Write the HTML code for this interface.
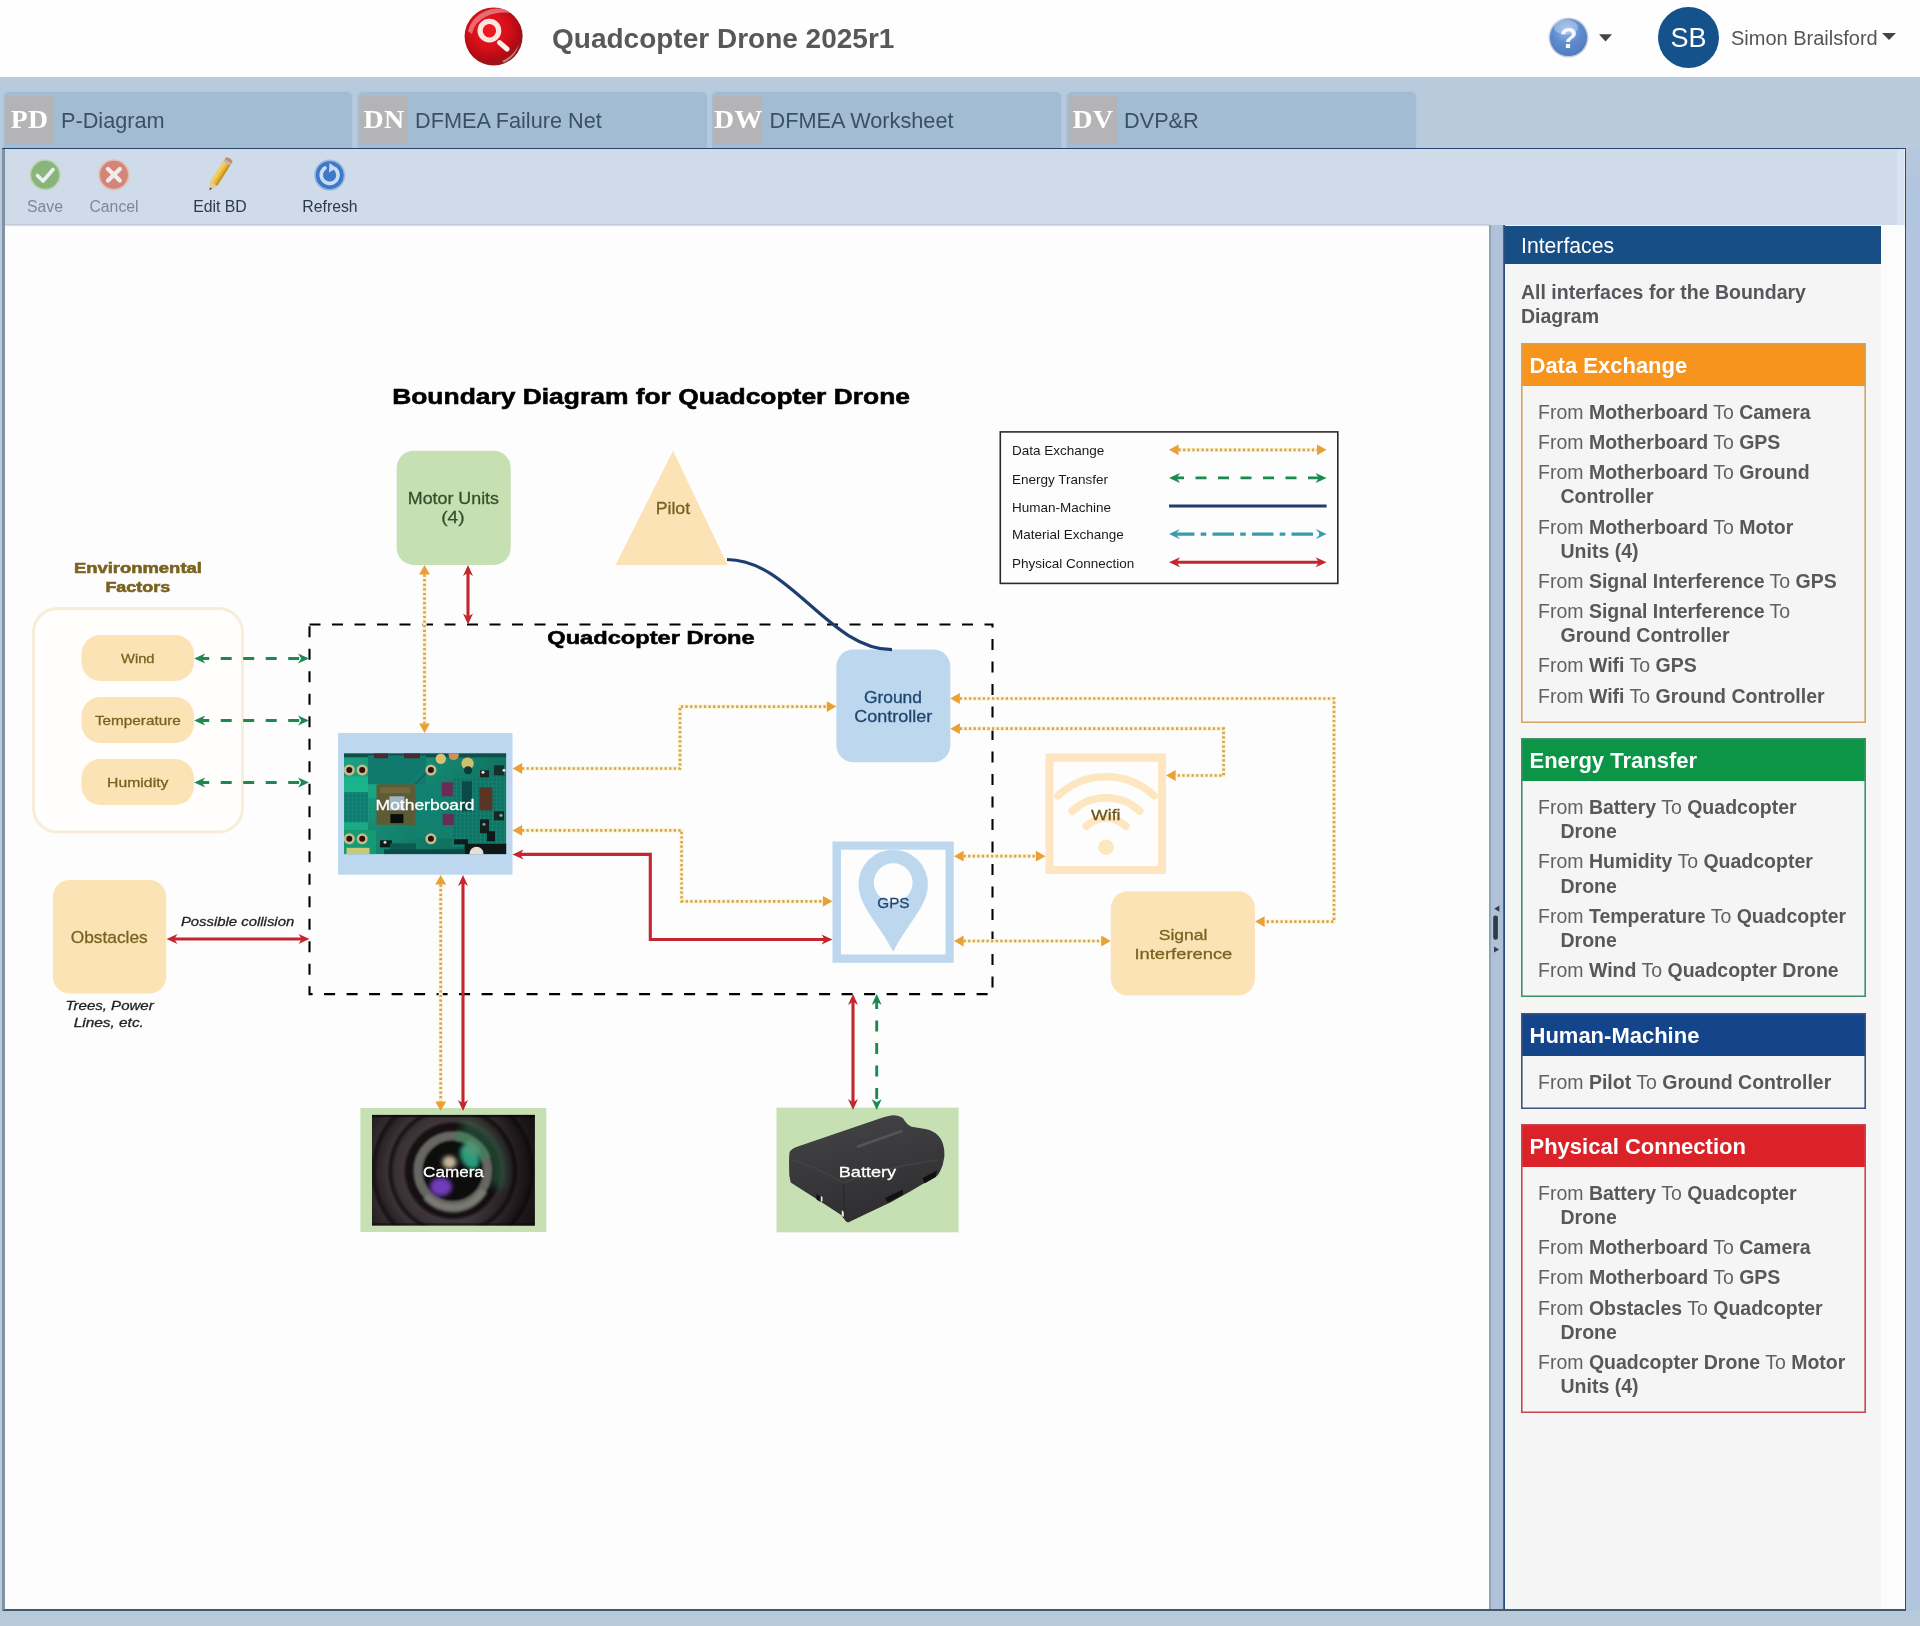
<!DOCTYPE html>
<html lang="en">
<head>
<meta charset="utf-8">
<title>Quadcopter Drone 2025r1</title>
<style>
*{box-sizing:border-box;margin:0;padding:0}
html,body{width:1920px;height:1626px;overflow:hidden;background:#b8cada;font-family:"Liberation Sans",sans-serif;}
body{position:relative;opacity:.999}
.abs{position:absolute}
#hdr{left:0;top:0;width:1920px;height:77px;background:#fefefe}
#title{left:552px;top:21.5px;font-size:28px;font-weight:bold;color:#58585a;white-space:nowrap;line-height:34px}
#avatar{left:1658px;top:7px;width:61px;height:61px;border-radius:50%;background:#15518a;color:#fff;font-size:27px;text-align:center;line-height:62px}
#uname{left:1731px;top:25px;font-size:20px;color:#555;white-space:nowrap;line-height:26px}
.caret{width:0;height:0;border-left:7px solid transparent;border-right:7px solid transparent;border-top:7.5px solid #444}
#tabbar{left:0;top:77px;width:1920px;height:72px;background:#b8cadb}
.tab{top:92px;height:57px;width:349px;background:#a2bcd3;border-radius:5px 5px 0 0;box-shadow:0 0 0 1.5px #b4c8dd}
.tab .ic{position:absolute;left:2px;top:4px;width:48px;height:48px;background:#b4b4b6;color:#fff;font-family:"Liberation Serif",serif;font-weight:bold;font-size:24.4px;line-height:48.6px;text-align:center;letter-spacing:0.3px}
.tab .ic span{display:inline-block;transform:scaleX(1.14)}
.tab .tx{position:absolute;left:57.5px;top:15px;font-size:21.7px;color:#3e4f63;line-height:28px;white-space:nowrap}
#frame{left:2px;top:148px;width:1904px;height:1463px;border:2px solid #2f5686;border-right:1.8px solid #2c4a76;border-top:0;border-left:3px solid #8292a6;border-bottom:2.5px solid #42596b;background:#fdfdfd}
#toolbar{left:5px;top:149px;width:1899px;height:76px;background:#cfdbe8;box-shadow:0 1px 2px rgba(120,130,140,.45)}
.tbl{font-size:15.8px;line-height:18px;white-space:nowrap;top:198px;text-align:center}
#canvas{left:5px;top:225px;width:1484px;height:1384px;background:#fdfdfd}
#split{left:1489px;top:225px;width:16.5px;height:1384px;background:linear-gradient(90deg,#8d9fb4 0,#8d9fb4 1.2px,#adbfd9 2.5px,#b2c2dc 8px,#a9c0d8 13.5px,#2b4c7c 14.8px,#2b4c7c 16.5px)}
#rp{left:1505px;top:225px;width:376px;height:1384px;background:#f5f5f6}
#rpw{left:1881px;top:225px;width:23px;height:1384px;background:#fcfcfd}
#rph{left:1505px;top:226px;width:376px;height:38px;background:#164e85;color:#fff;font-size:21.2px;line-height:40px;padding-left:16px}
#rpd{left:1521px;top:279.7px;width:340px;font-size:19.5px;font-weight:bold;color:#55575a;line-height:24.4px}
.box{left:1520.5px;width:345.5px;background:#f5f5f6}
.box:after{content:"";position:absolute;left:0;top:0;right:0;bottom:0;box-shadow:inset 0 0 0 1.6px var(--c);pointer-events:none}
.box h3{height:43px;margin:0;color:#fff;font-size:22px;line-height:46.6px;padding-left:9px;font-weight:bold}
.box ul{list-style:none;padding:14px 8px 8.5px 17.5px}
.box li{font-size:19.5px;line-height:24.3px;color:#606163;padding-left:22.5px;text-indent:-22.5px;margin-bottom:5.8px;white-space:nowrap}
.box li b{color:#57585a}
</style>
</head>
<body>
<div id="hdr" class="abs"></div>
<svg class="abs" style="left:462px;top:4px" width="64" height="64" viewBox="0 0 64 64">
<defs><radialGradient id="lg1" cx="0.42" cy="0.38" r="0.62"><stop offset="0" stop-color="#f01a22"/><stop offset="0.55" stop-color="#d40f18"/><stop offset="0.85" stop-color="#b00a12"/><stop offset="1" stop-color="#8e1a20"/></radialGradient></defs>
<circle cx="31.6" cy="32.4" r="29" fill="url(#lg1)"/>
<path d="M6,27 Q10,12 26,6 Q40,2 50,9 Q36,7 25,12 Q12,18 10,30Z" fill="#fff" opacity=".38"/>
<path d="M40,57 Q52,52 57,40 Q54,53 42,58.5Z" fill="#fff" opacity=".45"/>
<circle cx="27.4" cy="26.7" r="9.3" fill="#ee1820" stroke="#fce6e2" stroke-width="5.2"/>
<path d="M37.6,38.6 L45,45" stroke="#fdf0ee" stroke-width="5" stroke-linecap="round"/>
</svg>
<div id="title" class="abs">Quadcopter Drone 2025r1</div>
<svg class="abs" style="left:1546px;top:15px" width="72" height="46" viewBox="0 0 72 46">
<defs><radialGradient id="hg1" cx="0.45" cy="0.3" r="0.75"><stop offset="0" stop-color="#94b4e4"/><stop offset="0.5" stop-color="#5f8ccf"/><stop offset="1" stop-color="#4f78b8"/></radialGradient></defs>
<circle cx="22.5" cy="22.5" r="20" fill="#9aa8c0" opacity=".55"/>
<circle cx="22.5" cy="22.5" r="18.6" fill="url(#hg1)"/>
<ellipse cx="20" cy="12" rx="12" ry="7.5" fill="#fff" opacity=".28"/>
<text x="22.5" y="33" text-anchor="middle" font-family="Liberation Sans, sans-serif" font-weight="bold" font-size="29" fill="#f4f8ff">?</text>
<path d="M53,19.3 L66,19.3 L59.5,26.6Z" fill="#444"/>
</svg>
<div id="avatar" class="abs">SB</div>
<div id="uname" class="abs">Simon Brailsford</div>
<div class="abs caret" style="left:1882px;top:33px"></div>

<div id="tabbar" class="abs"></div>
<div class="abs tab" style="left:3.5px;width:348.5px"><div class="ic"><span>PD</span></div><div class="tx">P-Diagram</div></div>
<div class="abs tab" style="left:357.5px"><div class="ic"><span>DN</span></div><div class="tx">DFMEA Failure Net</div></div>
<div class="abs tab" style="left:712px"><div class="ic"><span>DW</span></div><div class="tx">DFMEA Worksheet</div></div>
<div class="abs tab" style="left:1066.5px"><div class="ic"><span>DV</span></div><div class="tx">DVP&amp;R</div></div>

<div id="frame" class="abs"></div>
<div id="toolbar" class="abs"></div>
<div class="abs" style="left:2px;top:147.7px;width:1903.5px;height:1.5px;background:#27476f"></div>
<div class="abs" style="left:1906px;top:150px;width:14px;height:1461px;background:linear-gradient(180deg,#b6c8dc,#b2c5de 30px)"></div>
<div class="abs" style="left:1897px;top:149px;width:7px;height:76px;background:#d8e2f2"></div>
<svg class="abs" style="left:5px;top:149px" width="400" height="76" viewBox="5 149 400 76">
<g opacity=".72">
<circle cx="45.2" cy="174.8" r="15.6" fill="#b7d3a6"/><circle cx="45.2" cy="174.8" r="14" fill="#6fa652"/>
<path d="M37.5,175.5 L43,181 L53,169.5" fill="none" stroke="#f4fbef" stroke-width="3.6" stroke-linecap="round" stroke-linejoin="round"/>
<circle cx="113.9" cy="174.8" r="15.6" fill="#e9b5a6"/><circle cx="113.9" cy="174.8" r="14" fill="#d3664e"/>
<path d="M108,169 L119.8,180.6 M119.8,169 L108,180.6" stroke="#fdf3ef" stroke-width="4.2" stroke-linecap="round"/>
</g>
<g transform="translate(219.8,174.3) rotate(32.8) scale(1.2,1.02)">
<rect x="-3.4" y="-13" width="6.8" height="24" fill="#e9b736"/><rect x="-3.4" y="-13" width="2.6" height="24" fill="#f3cf5c"/><rect x="1.4" y="-13" width="2" height="24" fill="#c9962a"/>
<path d="M-3.4,11 L0,18.5 L3.4,11Z" fill="#e8c99a"/><path d="M-1.2,16 L0,18.5 L1.2,16Z" fill="#5a4a3a"/>
<rect x="-3.4" y="-15" width="6.8" height="2.4" fill="#b9b9b9"/>
<path d="M-3.4,-15 L-3.4,-17 Q0,-20 3.4,-17 L3.4,-15Z" fill="#c98a6a"/>
</g>
<circle cx="329.7" cy="175.2" r="15.6" fill="#9db9e2"/><circle cx="329.7" cy="175.2" r="14" fill="#3f78c6"/>
<path d="M335.5,169 A8.4,8.4 0 1 1 325,168" fill="none" stroke="#c9dcf6" stroke-width="3.6" stroke-linecap="round"/>
<path d="M329.5,163 L336.5,168 L329,172.5Z" fill="#c9dcf6"/>
</svg>
<div class="abs tbl" style="left:15px;width:60px;color:#7d8896">Save</div>
<div class="abs tbl" style="left:79px;width:70px;color:#7d8896">Cancel</div>
<div class="abs tbl" style="left:180px;width:80px;color:#2b3a4b">Edit BD</div>
<div class="abs tbl" style="left:290px;width:80px;color:#2b3a4b">Refresh</div>

<div id="canvas" class="abs"></div>
<div class="abs" style="left:5px;top:224px;width:1484px;height:3px;background:linear-gradient(180deg,#b9c2cc,rgba(200,205,212,.5) 55%,rgba(253,253,253,0))"></div>
<!--DG0--><svg class="abs" id="dg" style="left:0;top:0;opacity:.999" width="1920" height="1626" viewBox="0 0 1920 1626" font-family="Liberation Sans, sans-serif">
<text x="392.2" y="403.8" font-size="21.2" fill="#000" font-weight="bold" font-style="normal" textLength="517.8" lengthAdjust="spacingAndGlyphs" stroke="#000" stroke-width="0.55">Boundary Diagram for Quadcopter Drone</text>
<rect x="396.7" y="450.8" width="114.0" height="114.1" rx="17" ry="17" fill="#c6e0b4" />
<polygon points="673,450.8 615.6,564.9 727.6,564.9" fill="#fce3b6"/>
<text x="407.8" y="503.8" font-size="16.1" fill="#33502a" font-weight="normal" font-style="normal" textLength="91.2" lengthAdjust="spacingAndGlyphs" stroke="#33502a" stroke-width="0.28">Motor Units</text>
<text x="441.2" y="523.2" font-size="16.1" fill="#33502a" font-weight="normal" font-style="normal" textLength="23.4" lengthAdjust="spacingAndGlyphs" stroke="#33502a" stroke-width="0.28">(4)</text>
<text x="655.7" y="514.0" font-size="16.1" fill="#7a6220" font-weight="normal" font-style="normal" textLength="34.4" lengthAdjust="spacingAndGlyphs" stroke="#7a6220" stroke-width="0.28">Pilot</text>
<text x="73.9" y="572.6" font-size="14.5" fill="#7a6220" font-weight="bold" font-style="normal" textLength="128.0" lengthAdjust="spacingAndGlyphs" stroke="#7a6220" stroke-width="0.55">Environmental</text>
<text x="105.4" y="592.4" font-size="14.5" fill="#7a6220" font-weight="bold" font-style="normal" textLength="64.9" lengthAdjust="spacingAndGlyphs" stroke="#7a6220" stroke-width="0.55">Factors</text>
<rect x="33.5" y="608.5" width="209" height="223.5" rx="24" ry="24" fill="#fffefc" stroke="#f8edd6" stroke-width="3"/>
<rect x="81.5" y="635.0" width="112.5" height="46.0" rx="19" ry="19" fill="#fce3b6" />
<rect x="81.5" y="697.0" width="112.5" height="46.0" rx="19" ry="19" fill="#fce3b6" />
<rect x="81.5" y="759.0" width="112.5" height="46.0" rx="19" ry="19" fill="#fce3b6" />
<text x="121.0" y="662.6" font-size="13.2" fill="#7a6220" font-weight="normal" font-style="normal" textLength="33.5" lengthAdjust="spacingAndGlyphs" stroke="#7a6220" stroke-width="0.28">Wind</text>
<text x="94.9" y="725.0" font-size="13.2" fill="#7a6220" font-weight="normal" font-style="normal" textLength="85.9" lengthAdjust="spacingAndGlyphs" stroke="#7a6220" stroke-width="0.28">Temperature</text>
<text x="107.1" y="787.0" font-size="13.2" fill="#7a6220" font-weight="normal" font-style="normal" textLength="61.3" lengthAdjust="spacingAndGlyphs" stroke="#7a6220" stroke-width="0.28">Humidity</text>
<rect x="309.5" y="624.5" width="683" height="369.6" fill="none" stroke="#000" stroke-width="2.1" stroke-dasharray="11 11.5"/>
<text x="547.3" y="644.1" font-size="18.5" fill="#000" font-weight="bold" font-style="normal" textLength="207.4" lengthAdjust="spacingAndGlyphs" stroke="#000" stroke-width="0.55">Quadcopter Drone</text>
<rect x="52.8" y="880.0" width="113.5" height="113.5" rx="17" ry="17" fill="#fce3b6" />
<text x="70.7" y="943.1" font-size="16.2" fill="#7a6220" font-weight="normal" font-style="normal" textLength="77.0" lengthAdjust="spacingAndGlyphs" stroke="#7a6220" stroke-width="0.28">Obstacles</text>
<text x="180.9" y="925.7" font-size="13.2" fill="#222" font-weight="normal" font-style="italic" textLength="113.3" lengthAdjust="spacingAndGlyphs" stroke="#222" stroke-width="0.28">Possible collision</text>
<text x="65.5" y="1010.0" font-size="13.2" fill="#222" font-weight="normal" font-style="italic" textLength="88.2" lengthAdjust="spacingAndGlyphs" stroke="#222" stroke-width="0.28">Trees, Power</text>
<text x="73.7" y="1026.6" font-size="13.2" fill="#222" font-weight="normal" font-style="italic" textLength="70.2" lengthAdjust="spacingAndGlyphs" stroke="#222" stroke-width="0.28">Lines, etc.</text>
<rect x="836.4" y="649.4" width="113.9" height="112.9" rx="17" ry="17" fill="#bdd7ee" />
<text x="863.9" y="702.5" font-size="15.8" fill="#1f4570" font-weight="normal" font-style="normal" textLength="58.1" lengthAdjust="spacingAndGlyphs" stroke="#1f4570" stroke-width="0.28">Ground</text>
<text x="854.3" y="721.6" font-size="15.8" fill="#1f4570" font-weight="normal" font-style="normal" textLength="77.9" lengthAdjust="spacingAndGlyphs" stroke="#1f4570" stroke-width="0.28">Controller</text>
<rect x="1110.8" y="891.2" width="144.1" height="104.3" rx="17" ry="17" fill="#fce3b6" />
<text x="1158.8" y="939.9" font-size="15.5" fill="#7a6220" font-weight="normal" font-style="normal" textLength="48.7" lengthAdjust="spacingAndGlyphs" stroke="#7a6220" stroke-width="0.28">Signal</text>
<text x="1134.4" y="959.4" font-size="15.5" fill="#7a6220" font-weight="normal" font-style="normal" textLength="97.9" lengthAdjust="spacingAndGlyphs" stroke="#7a6220" stroke-width="0.28">Interference</text>
<rect x="338.0" y="733.0" width="174.5" height="141.7" rx="0" ry="0" fill="#bdd7ee" />
<g transform="translate(344,753.3)">
<defs>
<linearGradient id="mbg" x1="0" y1="0" x2="1" y2="0.5"><stop offset="0" stop-color="#1ba283"/><stop offset="0.45" stop-color="#158a72"/><stop offset="1" stop-color="#0f6a5c"/></linearGradient>
<clipPath id="mbc"><rect x="0" y="0" width="162.3" height="101"/></clipPath>
<pattern id="mbgrid" width="4" height="4" patternUnits="userSpaceOnUse"><path d="M0,0.5H4M0.5,0V4" stroke="#2aa98a" stroke-width="0.5" opacity="0.45"/></pattern>
</defs>
<g clip-path="url(#mbc)">
<rect width="162.3" height="101" fill="url(#mbg)"/>
<rect x="0" y="0" width="162.3" height="4" fill="#0d5048"/>
<rect x="24" y="2" width="58" height="29" fill="#117a6e"/>
<rect x="30" y="0" width="14" height="5" fill="#4a2a30"/><rect x="60" y="0" width="16" height="5" fill="#4a2a30"/>
<rect x="0" y="23" width="24" height="16" fill="#19b48c"/>
<rect x="0" y="39" width="24" height="30" fill="#0e7a70"/><rect x="0" y="39" width="30" height="30" fill="url(#mbgrid)"/>
<rect x="0" y="69" width="24" height="8" fill="#1aaa84"/>
<rect x="0" y="77" width="32" height="24" fill="#159a72"/>
<rect x="2.5" y="94.5" width="23" height="6.5" fill="#c9c878"/>
<rect x="24" y="31" width="10" height="14" fill="#1aa482"/>
<path d="M71,31 L82,20" stroke="#0a4f4a" stroke-width="1"/>
<rect x="72" y="31" width="26" height="40" fill="#128070"/>
<rect x="72" y="71" width="50" height="14" fill="#12806c"/>
<rect x="108" y="24" width="54" height="70" fill="#107264"/><rect x="108" y="24" width="54" height="70" fill="url(#mbgrid)"/>
<rect x="118" y="28" width="10" height="30" fill="#0a4a46"/>
<rect x="32.5" y="31" width="39" height="40.5" fill="#5d5a36"/>
<rect x="36" y="34" width="30" height="6" fill="#7a6a40" opacity=".8"/>
<rect x="45.4" y="43" width="15" height="14" fill="#a2b6c2"/>
<rect x="46.4" y="60.8" width="13" height="9" fill="#090e0c"/>
<rect x="97.8" y="29" width="11" height="14" fill="#6a2b56"/><rect x="98.8" y="60.8" width="11" height="11" fill="#6a2b56"/>
<rect x="135.4" y="34" width="13" height="23" fill="#5b3428"/>
<rect x="136" y="17" width="9" height="7" fill="#1c2422"/><circle cx="139" cy="19" r="1.5" fill="#e8e8e0"/>
<rect x="150" y="12" width="10" height="10" fill="#15302c"/><circle cx="160" cy="17" r="1.5" fill="#dcdcdc"/>
<rect x="150" y="58" width="10" height="9" fill="#122a26"/><circle cx="157" cy="62" r="1.6" fill="#a09890"/>
<rect x="136" y="66" width="9" height="14" fill="#10201e"/><circle cx="140" cy="71" r="1.6" fill="#8a8a84"/>
<rect x="143" y="78" width="8" height="10" fill="#0c1816"/>
<circle cx="96.8" cy="5.4" r="5.2" fill="#d6c074"/><circle cx="109.7" cy="1.5" r="5.2" fill="#c9935c"/><circle cx="123.6" cy="10.3" r="6.2" fill="#cdc06c"/>
<circle cx="124" cy="17" r="4" fill="#0c3a34"/>
<g fill="#c9ba8c"><circle cx="5.3" cy="16.7" r="5.5"/><circle cx="18.2" cy="16.7" r="5.5"/><circle cx="86.9" cy="16.7" r="5.5"/><circle cx="5.3" cy="85.5" r="5.5"/><circle cx="18.2" cy="85.5" r="5.5"/><circle cx="86.9" cy="85.5" r="5.5"/></g>
<g fill="#2b1208"><circle cx="5.3" cy="16.7" r="3"/><circle cx="18.2" cy="16.7" r="3"/><circle cx="86.9" cy="16.7" r="3"/><circle cx="5.3" cy="85.5" r="3"/><circle cx="18.2" cy="85.5" r="3"/><circle cx="86.9" cy="85.5" r="3"/></g>
<rect x="36" y="87" width="12" height="7" fill="#0c1a18"/><circle cx="41" cy="89" r="1.5" fill="#d0d8d4"/>
<rect x="46" y="90" width="26" height="8" fill="#0e5a52"/>
<rect x="40" y="96" width="80" height="5" fill="#0b4a46"/>
<rect x="120.6" y="90.5" width="42" height="10.5" fill="#0f1816"/>
<circle cx="132.5" cy="100.4" r="7" fill="#e6dfd8"/>
<rect x="110" y="86" width="14" height="5" fill="#101c1a"/>
</g>
</g>

<text x="375.6" y="810.3" font-size="15.2" fill="#fff" font-weight="normal" font-style="normal" textLength="99.0" lengthAdjust="spacingAndGlyphs" stroke="#fff" stroke-width="0.28">Motherboard</text>
<rect x="832.5" y="841.5" width="121.3" height="121.3" rx="0" ry="0" fill="#bdd7ee" />
<rect x="841.0" y="849.7" width="104.5" height="104.8" rx="0" ry="0" fill="#fdfdfd" />
<path d="M893.2,951.8 C 880,925 858.5,906 858.5,884.4 A34.7,34.7 0 1 1 927.9,884.4 C 927.9,906 906.4,925 893.2,951.8 Z M893.2,863.2 A19.4,19.4 0 1 0 893.2,902 A19.4,19.4 0 1 0 893.2,863.2 Z" fill="#bdd7ee" fill-rule="evenodd"/>
<text x="877.3" y="907.5" font-size="15.5" fill="#1f4570" font-weight="normal" font-style="normal" textLength="32.2" lengthAdjust="spacingAndGlyphs" stroke="#1f4570" stroke-width="0.28">GPS</text>
<rect x="1045.5" y="753.5" width="120.5" height="120.5" rx="0" ry="0" fill="#fde6c0" />
<rect x="1053.5" y="761.7" width="104.5" height="104.3" rx="0" ry="0" fill="#fdfdfd" />
<path d="M1057.9,795.7 A70.5,70.5 0 0 1 1154.1,795.7" fill="none" stroke="#fde6c0" stroke-width="7.6" stroke-linecap="round"/>
<path d="M1072.2,811.1 A49.5,49.5 0 0 1 1139.8,811.1" fill="none" stroke="#fde6c0" stroke-width="7.6" stroke-linecap="round"/>
<path d="M1086.2,826.1 A29,29 0 0 1 1125.8,826.1" fill="none" stroke="#fde6c0" stroke-width="7.6" stroke-linecap="round"/>
<circle cx="1106" cy="847.3" r="7.8" fill="#fde6c0"/>
<text x="1091.1" y="819.8" font-size="15.5" fill="#6b551c" font-weight="normal" font-style="normal" textLength="29.4" lengthAdjust="spacingAndGlyphs" stroke="#6b551c" stroke-width="0.28">Wifi</text>
<rect x="360.4" y="1108.0" width="185.9" height="124.0" rx="0" ry="0" fill="#c6e0b4" />
<g transform="translate(371.9,1114.7)">
<defs>
<clipPath id="cmc"><rect x="0" y="0" width="163" height="111"/></clipPath>
<radialGradient id="cmbg" cx="80.9" cy="56" r="100" gradientUnits="userSpaceOnUse">
<stop offset="0.40" stop-color="#141012"/><stop offset="0.46" stop-color="#161012"/><stop offset="0.50" stop-color="#3e3638"/><stop offset="0.58" stop-color="#383032"/><stop offset="0.625" stop-color="#1a1416"/><stop offset="0.66" stop-color="#3a3234"/><stop offset="0.75" stop-color="#2c2426"/><stop offset="0.795" stop-color="#181214"/><stop offset="0.83" stop-color="#322a2c"/><stop offset="1" stop-color="#221c1e"/></radialGradient>
<linearGradient id="cmsh" x1="0" y1="0" x2="1" y2="0"><stop offset="0" stop-color="#000" stop-opacity="0"/><stop offset="0.6" stop-color="#000" stop-opacity="0"/><stop offset="1" stop-color="#0a0608" stop-opacity=".62"/></linearGradient>
<filter id="cmb2" filterUnits="userSpaceOnUse" x="-20" y="-20" width="210" height="160"><feGaussianBlur stdDeviation="2.2"/></filter>
<filter id="cmb4" filterUnits="userSpaceOnUse" x="-20" y="-20" width="210" height="160"><feGaussianBlur stdDeviation="4"/></filter>
<filter id="cmb1" filterUnits="userSpaceOnUse" x="-20" y="-20" width="210" height="160"><feGaussianBlur stdDeviation="0.9"/></filter>
</defs>
<g clip-path="url(#cmc)">
<rect width="163" height="111" fill="url(#cmbg)"/>
<rect width="163" height="111" fill="url(#cmsh)"/>
<rect width="163" height="2.5" fill="#0c080a" opacity=".75"/><rect y="108.5" width="163" height="2.5" fill="#0c0a08" opacity=".5"/>
<path d="M90,12 A45,45 0 0 1 124,72" fill="none" stroke="#2f6a4c" stroke-width="14" opacity=".6" filter="url(#cmb4)"/>
<g filter="url(#cmb1)">
<circle cx="80.9" cy="56" r="35" fill="#0c0a0c" stroke="#666662" stroke-width="9"/>
<path d="M54,82 A36,36 0 0 0 112,76" fill="none" stroke="#83837c" stroke-width="8" opacity=".7"/>
<path d="M84,21 A35,35 0 0 1 114,44" fill="none" stroke="#477a5c" stroke-width="10.5" opacity=".9"/>
</g>
<ellipse cx="98" cy="42" rx="9" ry="13" fill="#2ba383" transform="rotate(-28 98 42)" filter="url(#cmb2)" opacity=".95"/>
<ellipse cx="100" cy="34" rx="7" ry="9" fill="#5a9a78" transform="rotate(-40 100 34)" filter="url(#cmb2)" opacity=".7"/>
<ellipse cx="77.5" cy="47.5" rx="7" ry="6.5" fill="#c4b49c" filter="url(#cmb2)"/>
<ellipse cx="69" cy="72" rx="11" ry="9.5" fill="#7c40cc" filter="url(#cmb2)" opacity=".9"/>
</g>
</g>

<text x="423.1" y="1176.5" font-size="15.2" fill="#fff" font-weight="normal" font-style="normal" textLength="60.8" lengthAdjust="spacingAndGlyphs" stroke="#fff" stroke-width="0.28">Camera</text>
<rect x="776.5" y="1107.6" width="182.1" height="124.7" rx="0" ry="0" fill="#c6e0b4" />
<defs>
<linearGradient id="btg" x1="0" y1="0" x2="0.3" y2="1"><stop offset="0" stop-color="#454547"/><stop offset="0.5" stop-color="#3a3a3c"/><stop offset="1" stop-color="#2f2f31"/></linearGradient>
</defs>
<path d="M789.6,1151.9 Q792,1148 797.8,1146.4 L879.8,1118.5 Q888,1115.5 894.1,1115.2 Q899,1115.3 902.8,1118 Q907,1125 911.6,1126.7 L922.5,1128.4 Q931,1129.5 935.6,1133.3 Q941.5,1138 943.3,1145.3 Q944.8,1150 944.4,1156.2 Q943.5,1165 940,1171.6 Q938.5,1175 935.6,1177 L923.6,1183.6 L910.5,1191.2 L890.8,1202.2 L870,1212 L848.1,1222.4 Q846.3,1222 845.4,1220.8 L841.6,1215.3 L819.7,1201.1 L790.7,1182.5 Q788.6,1175 789.1,1166.1 Q788.8,1157 789.6,1151.9 Z" fill="url(#btg)"/>
<path d="M858,1146.5 L901.5,1131.2" stroke="#5c5c5e" stroke-width="2.4" stroke-linecap="round" opacity=".8"/>
<path d="M843.7,1183 L843.7,1218" stroke="#2a2a2c" stroke-width="1.6"/>
<path d="M792,1160 Q815,1166 843.7,1183 Q880,1168 938,1160" fill="none" stroke="#47474a" stroke-width="1.5" opacity=".7"/>
<path d="M885,1198 L903,1189.5 L903,1194.5 L887.5,1202.5Z" fill="#111"/>
<path d="M922.5,1178 L937,1170.5 L935.6,1177 L924.5,1183.5Z" fill="#101010"/>
<path d="M816.5,1194 L820.5,1196.5 L820.5,1202 L816.5,1199.5Z" fill="#141414"/>
<path d="M820.8,1196 L822.5,1197 L822.5,1201 L820.8,1202Z" fill="#e8efe4"/>
<path d="M841.8,1210 L843.8,1212 L843.8,1217 L841.8,1215.5Z" fill="#e8efe4"/>

<text x="838.7" y="1176.5" font-size="15.2" fill="#fff" font-weight="normal" font-style="normal" textLength="57.5" lengthAdjust="spacingAndGlyphs" stroke="#fff" stroke-width="0.28">Battery</text>
<path d="M424.5,574.5 L424.5,723.5" fill="none" stroke="#fdf3d2" stroke-width="4.2"/>
<path d="M424.5,574.5 L424.5,723.5" fill="none" stroke="#cfa655" stroke-width="2.7" stroke-dasharray="2.2 2.4"/>
<polygon points="424.5,565.0 429.9,574.6 419.1,574.6" fill="#eba033"/>
<polygon points="424.5,733.0 419.1,723.4 429.9,723.4" fill="#eba033"/>
<path d="M468.0,572.5 L468.0,617.0" fill="none" stroke="#c3262e" stroke-width="3.1" stroke-linejoin="miter"/>
<polygon points="468.0,565.0 473.0,576.0 468.0,572.8 463.0,576.0" fill="#c3262e"/>
<polygon points="468.0,624.5 463.0,613.5 468.0,616.7 473.0,613.5" fill="#c3262e"/>
<path d="M727,559.5 C 790,559.5 829,649.6 892,649.6" fill="none" stroke="#1d3f6f" stroke-width="3.2"/>
<path d="M522.0,768.5 L680.0,768.5 L680.0,706.6 L826.9,706.6" fill="none" stroke="#fdf3d2" stroke-width="4.2"/>
<path d="M522.0,768.5 L680.0,768.5 L680.0,706.6 L826.9,706.6" fill="none" stroke="#cfa655" stroke-width="2.7" stroke-dasharray="2.2 2.4"/>
<polygon points="512.5,768.5 522.1,763.1 522.1,773.9" fill="#eba033"/>
<polygon points="836.4,706.6 826.8,712.0 826.8,701.2" fill="#eba033"/>
<path d="M522.0,830.4 L681.6,830.4 L681.6,901.3 L823.0,901.3" fill="none" stroke="#fdf3d2" stroke-width="4.2"/>
<path d="M522.0,830.4 L681.6,830.4 L681.6,901.3 L823.0,901.3" fill="none" stroke="#cfa655" stroke-width="2.7" stroke-dasharray="2.2 2.4"/>
<polygon points="512.5,830.4 522.1,825.0 522.1,835.8" fill="#eba033"/>
<polygon points="832.5,901.3 822.9,906.7 822.9,895.9" fill="#eba033"/>
<path d="M520.0,854.4 L650.3,854.4 L650.3,939.5 L825.0,939.5" fill="none" stroke="#c3262e" stroke-width="3.1" stroke-linejoin="miter"/>
<polygon points="512.5,854.4 523.5,849.4 520.3,854.4 523.5,859.4" fill="#c3262e"/>
<polygon points="832.5,939.5 821.5,944.5 824.7,939.5 821.5,934.5" fill="#c3262e"/>
<path d="M440.7,884.5 L440.7,1101.5" fill="none" stroke="#fdf3d2" stroke-width="4.2"/>
<path d="M440.7,884.5 L440.7,1101.5" fill="none" stroke="#cfa655" stroke-width="2.7" stroke-dasharray="2.2 2.4"/>
<polygon points="440.7,875.0 446.1,884.6 435.3,884.6" fill="#eba033"/>
<polygon points="440.7,1111.0 435.3,1101.4 446.1,1101.4" fill="#eba033"/>
<path d="M463.0,882.5 L463.0,1103.5" fill="none" stroke="#c3262e" stroke-width="3.1" stroke-linejoin="miter"/>
<polygon points="463.0,875.0 468.0,886.0 463.0,882.8 458.0,886.0" fill="#c3262e"/>
<polygon points="463.0,1111.0 458.0,1100.0 463.0,1103.2 468.0,1100.0" fill="#c3262e"/>
<path d="M853.0,1001.5 L853.0,1102.5" fill="none" stroke="#c3262e" stroke-width="3.1" stroke-linejoin="miter"/>
<polygon points="853.0,994.0 858.0,1005.0 853.0,1001.8 848.0,1005.0" fill="#c3262e"/>
<polygon points="853.0,1110.0 848.0,1099.0 853.0,1102.2 858.0,1099.0" fill="#c3262e"/>
<path d="M876.7,998.0 L876.7,1102.5" fill="none" stroke="#1c8a4e" stroke-width="2.9" stroke-dasharray="11 11.5"/>
<polygon points="876.7,994.0 881.7,1005.0 876.7,1001.8 871.7,1005.0" fill="#1c8a4e"/>
<polygon points="876.7,1110.0 871.7,1099.0 876.7,1102.2 881.7,1099.0" fill="#1c8a4e"/>
<path d="M174.0,939.0 L302.0,939.0" fill="none" stroke="#c3262e" stroke-width="3.1" stroke-linejoin="miter"/>
<polygon points="166.5,939.0 177.5,934.0 174.3,939.0 177.5,944.0" fill="#c3262e"/>
<polygon points="309.5,939.0 298.5,944.0 301.7,939.0 298.5,934.0" fill="#c3262e"/>
<path d="M198.2,658.5 L301.5,658.5" fill="none" stroke="#1c8a4e" stroke-width="2.9" stroke-dasharray="11 11.5"/>
<polygon points="194.2,658.5 205.2,653.5 202.0,658.5 205.2,663.5" fill="#1c8a4e"/>
<polygon points="309.0,658.5 298.0,663.5 301.2,658.5 298.0,653.5" fill="#1c8a4e"/>
<path d="M198.2,720.5 L301.5,720.5" fill="none" stroke="#1c8a4e" stroke-width="2.9" stroke-dasharray="11 11.5"/>
<polygon points="194.2,720.5 205.2,715.5 202.0,720.5 205.2,725.5" fill="#1c8a4e"/>
<polygon points="309.0,720.5 298.0,725.5 301.2,720.5 298.0,715.5" fill="#1c8a4e"/>
<path d="M198.2,782.5 L301.5,782.5" fill="none" stroke="#1c8a4e" stroke-width="2.9" stroke-dasharray="11 11.5"/>
<polygon points="194.2,782.5 205.2,777.5 202.0,782.5 205.2,787.5" fill="#1c8a4e"/>
<polygon points="309.0,782.5 298.0,787.5 301.2,782.5 298.0,777.5" fill="#1c8a4e"/>
<path d="M959.8,698.5 L1334.0,698.5 L1334.0,921.6 L1264.5,921.6" fill="none" stroke="#fdf3d2" stroke-width="4.2"/>
<path d="M959.8,698.5 L1334.0,698.5 L1334.0,921.6 L1264.5,921.6" fill="none" stroke="#cfa655" stroke-width="2.7" stroke-dasharray="2.2 2.4"/>
<polygon points="950.3,698.5 959.9,693.1 959.9,703.9" fill="#eba033"/>
<polygon points="1255.0,921.6 1264.6,916.2 1264.6,927.0" fill="#eba033"/>
<path d="M959.8,728.7 L1223.6,728.7 L1223.6,775.5 L1175.5,775.5" fill="none" stroke="#fdf3d2" stroke-width="4.2"/>
<path d="M959.8,728.7 L1223.6,728.7 L1223.6,775.5 L1175.5,775.5" fill="none" stroke="#cfa655" stroke-width="2.7" stroke-dasharray="2.2 2.4"/>
<polygon points="950.3,728.7 959.9,723.3 959.9,734.1" fill="#eba033"/>
<polygon points="1166.0,775.5 1175.6,770.1 1175.6,780.9" fill="#eba033"/>
<path d="M963.5,856.2 L1036.0,856.2" fill="none" stroke="#fdf3d2" stroke-width="4.2"/>
<path d="M963.5,856.2 L1036.0,856.2" fill="none" stroke="#cfa655" stroke-width="2.7" stroke-dasharray="2.2 2.4"/>
<polygon points="954.0,856.2 963.6,850.8 963.6,861.6" fill="#eba033"/>
<polygon points="1045.5,856.2 1035.9,861.6 1035.9,850.8" fill="#eba033"/>
<path d="M963.5,941.0 L1101.3,941.0" fill="none" stroke="#fdf3d2" stroke-width="4.2"/>
<path d="M963.5,941.0 L1101.3,941.0" fill="none" stroke="#cfa655" stroke-width="2.7" stroke-dasharray="2.2 2.4"/>
<polygon points="954.0,941.0 963.6,935.6 963.6,946.4" fill="#eba033"/>
<polygon points="1110.8,941.0 1101.2,946.4 1101.2,935.6" fill="#eba033"/>
<rect x="1000.3" y="431.9" width="337.5" height="151.5" fill="#fdfdfd" stroke="#2a2a2a" stroke-width="1.6"/>
<text x="1012" y="455" font-size="13.5" fill="#1a1a1a">Data Exchange</text>
<text x="1012" y="483.5" font-size="13.5" fill="#1a1a1a">Energy Transfer</text>
<text x="1012" y="511.6" font-size="13.5" fill="#1a1a1a">Human-Machine</text>
<text x="1012" y="539.4" font-size="13.5" fill="#1a1a1a">Material Exchange</text>
<text x="1012" y="567.9" font-size="13.5" fill="#1a1a1a">Physical Connection</text>
<path d="M1178.5,449.8 L1317.1,449.8" fill="none" stroke="#fdf3d2" stroke-width="4.2"/>
<path d="M1178.5,449.8 L1317.1,449.8" fill="none" stroke="#cfa655" stroke-width="2.7" stroke-dasharray="2.2 2.4"/>
<polygon points="1169.0,449.8 1178.6,444.4 1178.6,455.2" fill="#eba033"/>
<polygon points="1326.6,449.8 1317.0,455.2 1317.0,444.4" fill="#eba033"/>
<path d="M1173.0,477.9 L1319.1,477.9" fill="none" stroke="#1c8a4e" stroke-width="2.9" stroke-dasharray="11 11.5"/>
<polygon points="1169.0,477.9 1180.0,472.9 1176.8,477.9 1180.0,482.9" fill="#1c8a4e"/>
<polygon points="1326.6,477.9 1315.6,482.9 1318.8,477.9 1315.6,472.9" fill="#1c8a4e"/>
<path d="M1169,506 H1326.6" stroke="#1d3f6f" stroke-width="3.2"/>
<path d="M1173,534.1 H1321" stroke="#3a9aae" stroke-width="3.2" stroke-dasharray="21.5 6.2 5.6 6.2"/>
<polygon points="1169.0,534.1 1180.0,528.9 1175.5,534.1 1180.0,539.3" fill="#3a9aae"/>
<polygon points="1326.6,534.1 1315.6,539.3 1320.1,534.1 1315.6,528.9" fill="#3a9aae"/>
<path d="M1176.5,562.3 L1319.1,562.3" fill="none" stroke="#c3262e" stroke-width="3.1" stroke-linejoin="miter"/>
<polygon points="1169.0,562.3 1180.0,557.3 1176.8,562.3 1180.0,567.3" fill="#c3262e"/>
<polygon points="1326.6,562.3 1315.6,567.3 1318.8,562.3 1315.6,557.3" fill="#c3262e"/>
</svg><!--DG1-->
<div id="split" class="abs"></div>
<svg class="abs" style="left:1489px;top:900px" width="16" height="56" viewBox="1489 900 16 56"><rect x="1493.2" y="915.6" width="4.7" height="24.2" rx="2.2" fill="#2f3c43"/><path d="M1494.2,908.7 L1499.4,905.6 L1499.4,911.8Z" fill="#343d52"/><path d="M1499.2,949.5 L1494,946.4 L1494,952.6Z" fill="#343d52"/></svg>
<div id="rp" class="abs"></div>
<div id="rpw" class="abs"></div>
<div id="rph" class="abs">Interfaces</div>
<div id="rpd" class="abs">All interfaces for the Boundary<br>Diagram</div>
<div class="abs box" style="top:343px;height:380px;--c:#d3a55c"><h3 style="background:#f7941d">Data Exchange</h3><ul>
<li>From <b>Motherboard</b> To <b>Camera</b></li>
<li>From <b>Motherboard</b> To <b>GPS</b></li>
<li>From <b>Motherboard</b> To <b>Ground<br>Controller</b></li>
<li>From <b>Motherboard</b> To <b>Motor<br>Units (4)</b></li>
<li>From <b>Signal Interference</b> To <b>GPS</b></li>
<li>From <b>Signal Interference</b> To<br><b>Ground Controller</b></li>
<li>From <b>Wifi</b> To <b>GPS</b></li>
<li>From <b>Wifi</b> To <b>Ground Controller</b></li>
</ul></div>
<div class="abs box" style="top:738px;height:259px;--c:#3f9067"><h3 style="background:#0c9447">Energy Transfer</h3><ul>
<li>From <b>Battery</b> To <b>Quadcopter<br>Drone</b></li>
<li>From <b>Humidity</b> To <b>Quadcopter<br>Drone</b></li>
<li>From <b>Temperature</b> To <b>Quadcopter<br>Drone</b></li>
<li>From <b>Wind</b> To <b>Quadcopter Drone</b></li>
</ul></div>
<div class="abs box" style="top:1012.5px;height:96px;--c:#3c5480"><h3 style="background:#14458a">Human-Machine</h3><ul>
<li>From <b>Pilot</b> To <b>Ground Controller</b></li>
</ul></div>
<div class="abs box" style="top:1124px;height:288.5px;--c:#c9464e"><h3 style="background:#dc2229">Physical Connection</h3><ul>
<li>From <b>Battery</b> To <b>Quadcopter<br>Drone</b></li>
<li>From <b>Motherboard</b> To <b>Camera</b></li>
<li>From <b>Motherboard</b> To <b>GPS</b></li>
<li>From <b>Obstacles</b> To <b>Quadcopter<br>Drone</b></li>
<li>From <b>Quadcopter Drone</b> To <b>Motor<br>Units (4)</b></li>
</ul></div>
</body>
</html>
